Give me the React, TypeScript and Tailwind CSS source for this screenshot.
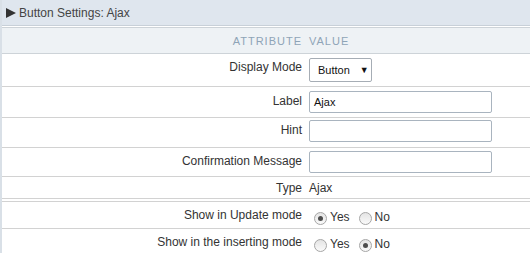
import React from 'react'

// Fenêtre de propriétés d'un bouton (attribut / valeur)

const Radio = ({ checked }: { checked?: boolean }) => (
  <span className="relative inline-flex items-center justify-center w-[13px] h-[13px] rounded-full border border-[#a6a6a6] bg-gradient-to-b from-[#e4e4e4] to-[#fafafa] ml-[5px] mr-[3px] translate-y-[1px]">
    {checked && <span className="w-[5px] h-[5px] rounded-full bg-[#4d4d4d]" />}
  </span>
)

const Row = ({
  label,
  h,
  pt = 'pt-[5px]',
  border = 'border-b border-[#d2d2d2]',
  children,
}: {
  label: string
  h: string
  pt?: string
  border?: string
  children?: React.ReactNode
}) => (
  <div className={`flex ${h} ${border}`}>
    <div className={`w-[303px] shrink-0 text-right pr-[3px] ${pt}`}>{label}</div>
    <div className="flex-1 pl-[4px]">{children}</div>
  </div>
)

export default function App() {
  return (
    <div className="w-[530px] h-[253px] overflow-hidden bg-white border-l-2 border-[#d9e0e7] font-['Liberation_Sans',Arial,sans-serif] text-[12px] leading-[14px] text-[#333]">
      {/* titre */}
      <div className="h-[26px] bg-[#dfe6ee] border-b border-[#c8d0d8] flex items-center pl-[4px] gap-[3px] text-[#444]">
        <svg width="10" height="10" viewBox="0 0 10 10">
          <path d="M0 0 L10 5 L0 10 Z" fill="#333" />
        </svg>
        <span>Button Settings: Ajax</span>
      </div>

      {/* entête du tableau */}
      <div className="mt-px flex h-[27px] bg-[#eef2f5] border-y border-[#cdd3d8] items-center text-[11px] tracking-[1px] text-[#8ea4b7]">
        <div className="w-[303px] text-right pr-[3px]">ATTRIBUTE</div>
        <div className="pl-[4px]">VALUE</div>
      </div>

      <Row label="Display Mode" h="h-[33px]" pt="pt-[6px]">
        <div className="mt-[4px] w-[63px] h-[24px] border border-[#a6adb5] rounded-[2px] bg-white flex items-center pl-[8px] gap-[10px] text-[11px] text-[#111]">
          <span>Button</span>
          <span className="text-[9px]">▼</span>
        </div>
      </Row>

      <Row label="Label" h="h-[31px]" pt="pt-[7px]">
        <div className="mt-[4px] w-[183px] h-[22px] border border-[#a9b4bf] rounded-[2px] flex items-center pl-[4px] text-[11px] text-[#111]">
          Ajax
        </div>
      </Row>

      <Row label="Hint" h="h-[30px]" pt="pt-[5px]">
        <div className="mt-[2px] w-[183px] h-[22px] border border-[#a9b4bf] rounded-[2px]" />
      </Row>

      <Row label="Confirmation Message" h="h-[29px]" pt="pt-[6px]">
        <div className="mt-[3px] w-[183px] h-[22px] border border-[#a9b4bf] rounded-[2px]" />
      </Row>

      <Row label="Type" h="h-[25px]" pt="pt-[4px]" border="border-b-[4px] border-double border-[#d2d2d2]">
        <div className="pt-[4px]">Ajax</div>
      </Row>

      <Row label="Show in Update mode" h="h-[27px]" pt="pt-[6px]">
        <div className="pt-[8px] flex items-center">
          <Radio checked />
          <span className="mr-[4px]">Yes</span>
          <Radio />
          <span>No</span>
        </div>
      </Row>

      <Row label="Show in the inserting mode" h="h-[26px]" pt="pt-[6px]" border="">
        <div className="pt-[8px] flex items-center">
          <Radio />
          <span className="mr-[4px]">Yes</span>
          <Radio checked />
          <span>No</span>
        </div>
      </Row>
    </div>
  )
}
